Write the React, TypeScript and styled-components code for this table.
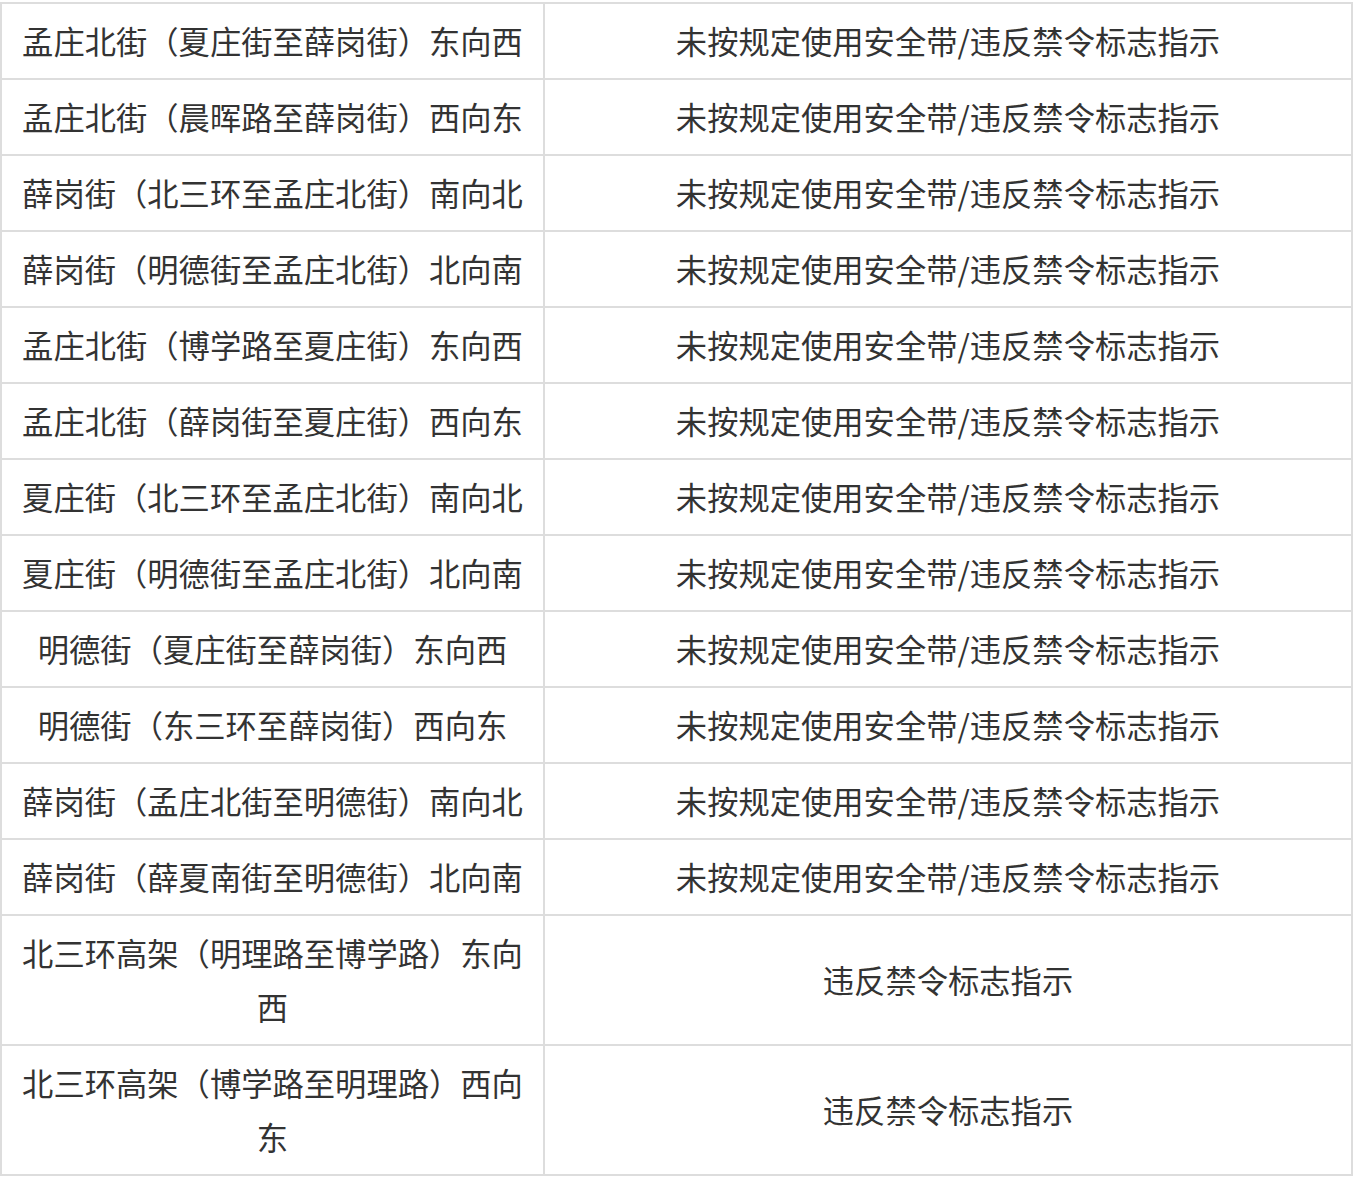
import React from "react";
import styled, { createGlobalStyle } from "styled-components";

const Global = createGlobalStyle`
  html, body { margin: 0; padding: 0; background: #fff; }
  body { padding-top: 2px; font-family: "Noto Sans CJK SC", "Noto Sans", sans-serif; }
`;

const Table = styled.table`
  width: 1353px;
  border-collapse: separate;
  border-spacing: 0;
  border-top: 2px solid #dddddd;
  border-left: 2px solid #dddddd;
  table-layout: fixed;
  color: #333333;
  font-size: 31.3px;
  line-height: 54px;
`;

const Cell = styled.td<{ $wide?: boolean }>`
  width: ${(p) => (p.$wide ? "auto" : "501px")};
  padding: 10px 20px;
  text-align: center;
  vertical-align: middle;
  border-right: 2px solid #dddddd;
  border-bottom: 2px solid #dddddd;
  word-break: break-all;
`;

const rows: [string, string][] = [
  ["孟庄北街（夏庄街至薛岗街）东向西", "未按规定使用安全带/违反禁令标志指示"],
  ["孟庄北街（晨晖路至薛岗街）西向东", "未按规定使用安全带/违反禁令标志指示"],
  ["薛岗街（北三环至孟庄北街）南向北", "未按规定使用安全带/违反禁令标志指示"],
  ["薛岗街（明德街至孟庄北街）北向南", "未按规定使用安全带/违反禁令标志指示"],
  ["孟庄北街（博学路至夏庄街）东向西", "未按规定使用安全带/违反禁令标志指示"],
  ["孟庄北街（薛岗街至夏庄街）西向东", "未按规定使用安全带/违反禁令标志指示"],
  ["夏庄街（北三环至孟庄北街）南向北", "未按规定使用安全带/违反禁令标志指示"],
  ["夏庄街（明德街至孟庄北街）北向南", "未按规定使用安全带/违反禁令标志指示"],
  ["明德街（夏庄街至薛岗街）东向西", "未按规定使用安全带/违反禁令标志指示"],
  ["明德街（东三环至薛岗街）西向东", "未按规定使用安全带/违反禁令标志指示"],
  ["薛岗街（孟庄北街至明德街）南向北", "未按规定使用安全带/违反禁令标志指示"],
  ["薛岗街（薛夏南街至明德街）北向南", "未按规定使用安全带/违反禁令标志指示"],
  ["北三环高架（明理路至博学路）东向西", "违反禁令标志指示"],
  ["北三环高架（博学路至明理路）西向东", "违反禁令标志指示"],
];

export default function App() {
  return (
    <>
      <Global />
      <Table>
        <tbody>
          {rows.map(([road, rule], i) => (
            <tr key={i}>
              <Cell>{road}</Cell>
              <Cell $wide>{rule}</Cell>
            </tr>
          ))}
        </tbody>
      </Table>
    </>
  );
}
